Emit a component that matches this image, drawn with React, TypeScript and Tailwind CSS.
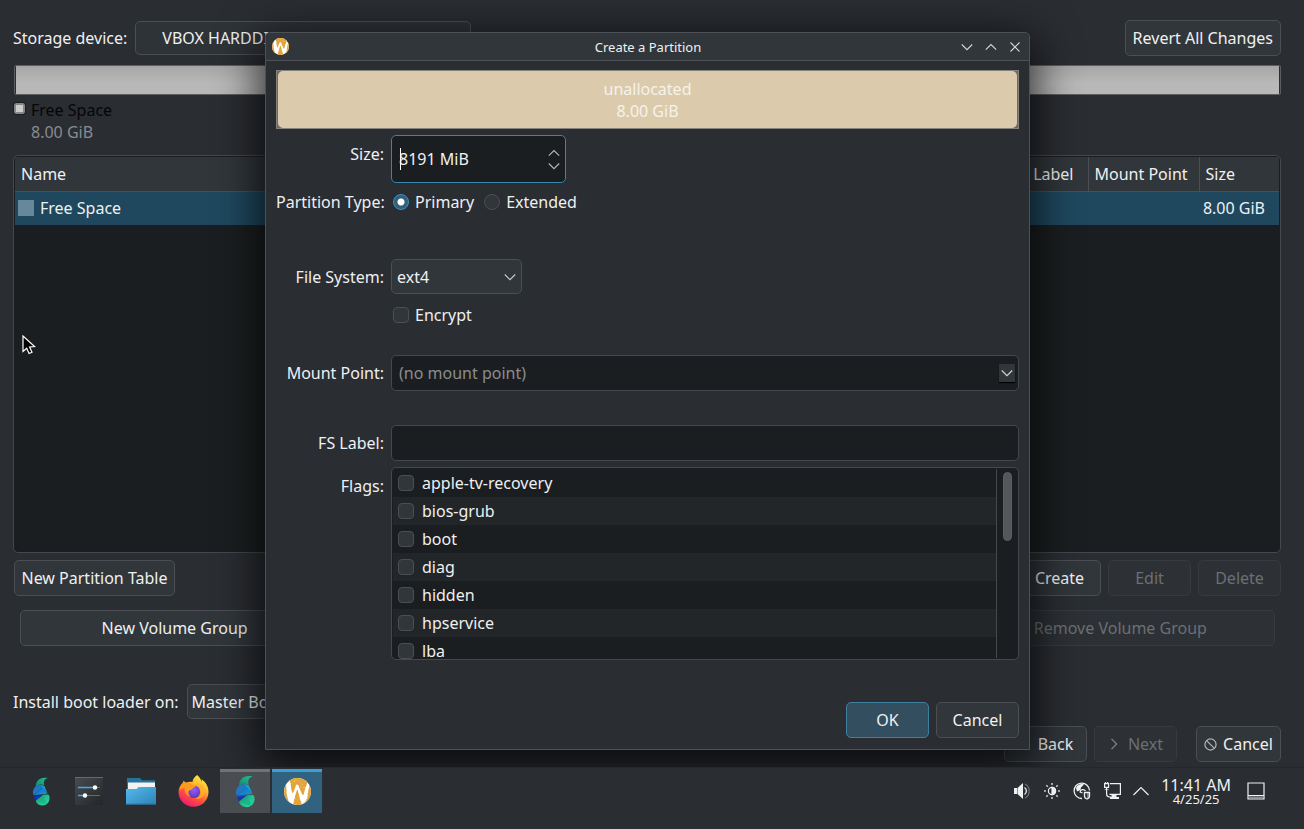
import { useState } from "react";
import type { ReactNode } from "react";
import clsx from "clsx";
import { SiWayland } from "react-icons/si";

const flags = ["apple-tv-recovery", "bios-grub", "boot", "diag", "hidden", "hpservice", "lba"];

type ButtonProps = {
  children: ReactNode;
  disabled?: boolean;
  primary?: boolean;
  className?: string;
};

function Button({ children, disabled, primary, className }: ButtonProps) {
  return (
    <button
      type="button"
      disabled={disabled}
      className={clsx(
        "flex h-9 items-center justify-center gap-2 whitespace-nowrap rounded-[5px] border",
        disabled && "border-[#373b40] bg-[#2d3136] text-[#6b6f73]",
        !disabled && primary && "border-[#3f7f9f] bg-[#334e5e]",
        !disabled && !primary && "border-[#4b4f53] bg-[#31363b]",
        className
      )}
    >
      {children}
    </button>
  );
}

function Chevron({ d, className }: { d: string; className?: string }) {
  return (
    <svg viewBox="0 0 12 12" className={clsx("h-3 w-3 shrink-0", className)} fill="none" stroke="currentColor" strokeWidth="1.1">
      <path d={d} />
    </svg>
  );
}

const DOWN = "M0.8 3.5 6 8.7l5.2-5.2";
const UP = "M0.8 8.7 6 3.5l5.2 5.2";
const CLOSE = "M1.5 1.5l9 9m0-9l-9 9";
const LEFT = "M8.7 0.8 3.5 6l5.2 5.2";
const RIGHT = "M3.5 0.8 8.7 6l-5.2 5.2";

function WaylandLogo({ className }: { className?: string }) {
  return (
    <span className={clsx("block overflow-hidden rounded-full bg-white", className)}>
      <SiWayland className="h-full w-full scale-125 text-[#e3a53a]" />
    </span>
  );
}

function SeedLogo({ className }: { className?: string }) {
  return (
    <svg viewBox="194 28 64 104" className={className}>
      <defs>
        <linearGradient id="tail" x1="0" y1="1" x2="1" y2="0">
          <stop offset="0" stopColor="#128a70" />
          <stop offset="1" stopColor="#22c08e" />
        </linearGradient>
        <linearGradient id="belly" x1="0" y1="0" x2="1" y2="1">
          <stop offset="0" stopColor="#1a66cc" />
          <stop offset="1" stopColor="#0e9bd8" />
        </linearGradient>
        <linearGradient id="seed" x1="0" y1="0" x2="1" y2="1">
          <stop offset="0" stopColor="#19a581" />
          <stop offset="1" stopColor="#25dd9f" />
        </linearGradient>
      </defs>
      <path d="M251 32C240 34 233 43 238 58L224 54 207 62C207 40 224 26 251 32z" fill="url(#tail)" />
      <path d="M206 62L223 55 231 66 199 93C195 82 197 72 206 62z" fill="#2277c4" />
      <path d="M231 66L249 88 200 93z" fill="url(#belly)" />
      <path d="M223 55L238 60 250 88 231 66z" fill="#14a4cf" />
      <path d="M202 97L228 94 206 112C203 107 201 102 202 97z" fill="#0b34c8" />
      <path d="M207 113L234 92 253 91C262 103 254 130 232 130 218 130 210 123 207 113z" fill="url(#seed)" />
      <path d="M207 113L234 92 246 126z" fill="#16a27c" opacity=".45" />
    </svg>
  );
}

function SettingsIcon() {
  return (
    <svg viewBox="0 0 28 28" className="h-7 w-7">
      <defs>
        <linearGradient id="panel" x1="0" y1="0" x2="1" y2="1">
          <stop offset="0" stopColor="#4a4d50" />
          <stop offset="1" stopColor="#232629" />
        </linearGradient>
      </defs>
      <path d="M0 0h28v28H0z" fill="url(#panel)" />
      <path d="M0 0h28v1H0z" fill="#65696d" />
      <path d="M20 10.5h5M10 18.500h15" stroke="#66696c" strokeWidth="1.2" />
      <path d="M3 10.500h17M3 18.500h7" stroke="#3daee9" strokeWidth="1.4" />
      <circle cx="20" cy="10.500" r="2.200" fill="#fff" />
      <circle cx="10" cy="18.500" r="2.200" fill="#fff" />
    </svg>
  );
}

function FolderIcon() {
  return (
    <svg viewBox="0 0 30 27" className="h-[27px] w-[30px]">
      <defs>
        <linearGradient id="folder" x1="0" y1="0" x2="1" y2="1">
          <stop offset="0" stopColor="#55b9ee" />
          <stop offset="1" stopColor="#2d83b5" />
        </linearGradient>
      </defs>
      <path d="M1 0h13l2 2.200h13V14H1z" fill="#27719b" />
      <path d="M2 4.500h27V14H2z" fill="#f2f2f2" />
      <path d="M0 11h10.500l2-2H30v17.500H0z" fill="url(#folder)" />
      <path d="M0 25.700h30v.8H0z" fill="#276f98" />
    </svg>
  );
}

function FirefoxIcon() {
  return (
    <svg viewBox="0 0 92 96" className="h-8 w-[31px]">
      <defs>
        <linearGradient id="fire" x1=".8" y1="0" x2=".25" y2="1">
          <stop offset="0" stopColor="#fff14a" />
          <stop offset=".35" stopColor="#ffb52e" />
          <stop offset=".62" stopColor="#ff5a36" />
          <stop offset="1" stopColor="#ec1378" />
        </linearGradient>
        <radialGradient id="globe" cx=".5" cy=".35" r=".65">
          <stop offset="0" stopColor="#9a5cf5" />
          <stop offset="1" stopColor="#5a38c0" />
        </radialGradient>
      </defs>
      <path d="M57 0C65 7 69 14 70 21 71 18 71 16 70 13 85 23 92 38 91 53 89 78 70 95 46 95 21 95 1 76 1 51 1 39 6 30 14 23L17 17C19 21 21 22 24 23 30 20 37 20 43 21 43 12 49 6 57 0z" fill="url(#fire)" />
      <circle cx="47" cy="50" r="19" fill="url(#globe)" />
      <path d="M14 23L17 17C19 21 21 22 24 23 32 21 36 24 40 29L55 31C54 36 48 38 44 39 43 43 39 45 34 46 28 51 31 60 38 65 24 63 17 49 20 38 12 40 7 43 4 47 5 37 8 29 14 23z" fill="#ff9a1f" />
      <path d="M48 29C61 27 70 38 69 50 68 62 60 69 49 70 66 76 80 64 79 47 78 35 69 27 57 25z" fill="#ffb129" opacity=".8" />
    </svg>
  );
}

function VolumeIcon() {
  return (
    <svg viewBox="0 0 18 18" className="h-[18px] w-[18px]" fill="none" stroke="currentColor">
      <path d="M1 6h3v6H1zM4.500 6 10 1v16l-5.500-5z" fill="currentColor" stroke="none" />
      <path d="M11.500 5.500c2.500 1.500 2.500 5.500 0 7" strokeWidth="1.300" />
      <path d="M12 2c5.500 2.500 5.500 11.500 0 14" strokeWidth="1.200" opacity=".35" />
    </svg>
  );
}

function BrightnessIcon() {
  return (
    <svg viewBox="0 0 18 18" className="h-[18px] w-[18px]" fill="none" stroke="currentColor" strokeWidth="1.200">
      <circle cx="9" cy="9" r="3.600" />
      <path d="M9 5.400a3.600 3.600 0 0 1 0 7.200z" fill="currentColor" />
      <path d="M9 1v2M9 15v2M1 9h2M15 9h2M3.300 3.300l1.500 1.500M13.200 13.200l1.500 1.500M14.700 3.300l-1.500 1.500M4.800 13.200l-1.500 1.500" strokeWidth="1.600" opacity=".8" />
    </svg>
  );
}

function VaultIcon() {
  return (
    <svg viewBox="0 0 18 18" className="h-[18px] w-[18px]" fill="none" stroke="currentColor" strokeWidth="1.300">
      <path d="M16.500 8.500A7.700 7.700 0 1 0 9 16.500" />
      <path d="M3 6C5 2 8 1.500 11 2.500L8 5.500 7.500 8 4 9.500z" fill="currentColor" stroke="none" />
      <path d="M7 10.500c0-3 4-4 5.500-1.500M7 10l2.500 1" />
      <path d="M11.500 10.500h5V14c0 1.500-1 2.500-2.500 3-1.500-.5-2.500-1.500-2.500-3z" />
      <path d="M14 10.500h2.500V14c0 1.500-1 2.500-2.500 3z" fill="currentColor" opacity=".4" stroke="none" />
    </svg>
  );
}

function NetworkIcon() {
  return (
    <svg viewBox="0 0 18 18" className="h-[18px] w-[18px]" fill="none" stroke="currentColor" strokeWidth="1.200">
      <path d="M7 1.600h10.400v10.800H6.500" />
      <path d="M1.600 1.600H5.600v3.800H1.600zM2.500 1v-1M4.700 1v-1M3.600 5.400v6.600c0 2 1.200 3 3 3h1.700" />
      <path d="M1.600 7.500h4" opacity=".6" />
      <path d="M8.500 13h5v2H16v2H7v-2h1.500z" fill="currentColor" stroke="none" />
    </svg>
  );
}

function FormRow({ label, htmlFor, top, children }: { label: string; htmlFor: string; top?: boolean; children: ReactNode }) {
  return (
    <div className={clsx("flex gap-[7px]", top ? "items-start" : "items-center")}>
      <label htmlFor={htmlFor} className={clsx("w-[108px] shrink-0 whitespace-nowrap text-right", top && "pt-2")}>
        {label}
      </label>
      {children}
    </div>
  );
}

function PartitionDialog() {
  const [type, setType] = useState("primary");

  return (
    <section
      role="dialog"
      aria-labelledby="dialog-title"
      className="absolute left-[265px] right-[274px] top-8 rounded-t-[5px] border border-[#4e5256] bg-[#2a2d32] shadow-[0_12px_44px_6px_rgba(0,0,0,0.75)]"
    >
      <header className="flex h-7 items-center rounded-t-[5px] border-b border-[#4e5256] bg-[#31363b] px-1.5">
        <WaylandLogo className="h-[17px] w-[17px]" />
        <h1 id="dialog-title" className="flex-1 pl-[46px] text-center text-[13px] leading-5">
          Create a Partition
        </h1>
        <div className="flex gap-3 pr-0.5 text-[#d4d6d7]">
          <button type="button" aria-label="Minimize"><Chevron d={DOWN} /></button>
          <button type="button" aria-label="Maximize"><Chevron d={UP} /></button>
          <button type="button" aria-label="Close"><Chevron d={CLOSE} /></button>
        </div>
      </header>

      <div className="px-2.5 pb-[11px] pt-[9px]">
        <div className="h-[59px] border border-[#85827b] bg-[#686a6c] px-px">
          <div className="flex h-full flex-col items-center justify-center rounded-[5px] bg-[#dbcbac] leading-[22px] text-[#f6f2ea]">
            <span>unallocated</span>
            <span>8.00 GiB</span>
          </div>
        </div>

        <div className="mt-1.5">
          <FormRow label="Size:" htmlFor="size" top>
            <div className="relative flex h-12 w-[175px] items-center rounded-[5px] border border-[#3587b0] bg-[#1b1e20] px-[7px]">
              <input id="size" type="text" defaultValue="8191 MiB" className="w-full min-w-0 bg-transparent outline-none" />
              <span className="absolute left-2 top-3 h-[22px] w-px bg-[#fcfcfc]" />
              <div className="-mr-1.5 flex flex-col gap-px text-[#b6b8ba]">
                <button type="button" aria-label="Increase" className="h-3 w-4"><Chevron d={UP} /></button>
                <button type="button" aria-label="Decrease" className="h-3 w-4"><Chevron d={DOWN} /></button>
              </div>
            </div>
          </FormRow>
        </div>

        <div role="radiogroup" aria-labelledby="ptype" className="mt-[5px] flex h-7 items-center gap-[7px]">
          <span id="ptype" className="w-[108px] shrink-0 whitespace-nowrap text-right">Partition Type:</span>
          <div className="flex gap-2.5 pl-0.5">
            {["Primary", "Extended"].map((name) => (
              <label key={name} className="flex items-center gap-1.5">
                <input
                  type="radio"
                  name="partition-type"
                  checked={type === name.toLowerCase()}
                  onChange={() => setType(name.toLowerCase())}
                  className="h-4 w-4 appearance-none rounded-full border border-[#4b4f53] bg-[#31363b] checked:border-[#3a93c2] checked:bg-[radial-gradient(circle,#ffffff_3px,#335f78_4px)]"
                />
                {name}
              </label>
            ))}
          </div>
        </div>

        <div className="mt-[43px]">
          <FormRow label="File System:" htmlFor="fs">
            <div className="relative w-[131px]">
              <select id="fs" className="h-[35px] w-full appearance-none rounded-[5px] border border-[#4b4f53] bg-[#31363b] px-[5px]">
                <option>ext4</option>
              </select>
              <Chevron d={DOWN} className="pointer-events-none absolute right-1.5 top-3 text-[#c8cacb]" />
            </div>
          </FormRow>
        </div>

        <label className="ml-[117px] mt-[9px] flex h-6 w-fit items-center gap-1.5">
          <input type="checkbox" className="h-4 w-4 appearance-none rounded-[4px] border border-[#4b4f53] bg-[#31363b]" />
          Encrypt
        </label>

        <div className="mt-7">
          <FormRow label="Mount Point:" htmlFor="mount">
            <div className="flex h-9 min-w-0 flex-1 items-center rounded-[5px] border border-[#45494d] bg-[#1b1e20] pl-[7px] pr-[3px]">
              <input id="mount" type="text" placeholder="(no mount point)" className="min-w-0 flex-1 bg-transparent outline-none placeholder:text-[#8a8d90]" />
              <button type="button" aria-label="Show mount points" className="flex h-[18px] w-4 items-center justify-center bg-[#31363b] text-[#d4d6d7] shadow-[0_1px_1px_#000]">
                <Chevron d={DOWN} />
              </button>
            </div>
          </FormRow>
        </div>

        <div className="mt-[34px]">
          <FormRow label="FS Label:" htmlFor="fslabel">
            <input id="fslabel" type="text" className="h-9 min-w-0 flex-1 rounded-[5px] border border-[#45494d] bg-[#1b1e20] px-[7px] outline-none" />
          </FormRow>
        </div>

        <div className="mt-1.5">
          <FormRow label="Flags:" htmlFor="flag-boot" top>
            <div className="flex h-[193px] min-w-0 flex-1 overflow-hidden rounded-[5px] border border-[#45494d] bg-[#1b1e20] p-px">
              <ul className="flex-1 border-r border-[#45494d]">
                {flags.map((flag) => (
                  <li key={flag} className="even:bg-[#232629]">
                    <label className="flex h-7 items-center gap-2 pl-[5px]">
                      <input id={`flag-${flag}`} type="checkbox" className="h-4 w-4 appearance-none rounded-[4px] border border-[#4b4f53] bg-[#31363b]" />
                      {flag}
                    </label>
                  </li>
                ))}
              </ul>
              <div className="w-5 pl-1.5 pt-[3px]">
                <div className="h-[69px] w-[9px] rounded-full border border-[#5b5f62] bg-[#54585b]" />
              </div>
            </div>
          </FormRow>
        </div>

        <div className="mt-[42px] flex justify-end gap-[7px]">
          <Button primary className="w-[83px]">OK</Button>
          <Button className="w-[83px]">Cancel</Button>
        </div>
      </div>
    </section>
  );
}

function PartitionTable() {
  return (
    <div className="mt-3 flex-1 overflow-hidden rounded-[5px] border border-[#45494d] bg-[#1b1e20] p-px">
      <table className="w-full table-fixed border-collapse">
        <thead className="border-b border-[#4b4f53] bg-[#31363b] text-left">
          <tr className="h-[34px] whitespace-nowrap">
            <th className="px-1.5 font-normal">Name</th>
            <th className="w-[111px] border-l border-[#4b4f53] pr-3.5 text-right font-normal">Label</th>
            <th className="w-[111px] border-l border-[#4b4f53] px-1.5 font-normal">Mount Point</th>
            <th className="w-[80px] border-l border-[#4b4f53] px-1.5 font-normal">Size</th>
          </tr>
        </thead>
        <tbody>
          <tr className="h-[34px] bg-[#1f485e]">
            <td className="pl-[3px]">
              <span className="flex items-center gap-1.5">
                <span className="h-4 w-4 bg-[#66889a]" />
                Free Space
              </span>
            </td>
            <td />
            <td />
            <td className="whitespace-nowrap pr-3.5 text-right">8.00 GiB</td>
          </tr>
        </tbody>
      </table>
    </div>
  );
}

function Taskbar() {
  return (
    <footer className="relative z-10 flex items-start border-t border-[#25282b] bg-[#2a2d32] pb-4 pl-5 pr-[39px] pt-px">
      <nav className="flex flex-1 gap-0.5">
        <button type="button" aria-label="Application launcher" className="flex h-11 w-[42px] items-center justify-center">
          <SeedLogo className="h-[29px] w-[18px]" />
        </button>
        <button type="button" aria-label="System settings" className="flex h-11 w-[50px] items-center justify-center">
          <SettingsIcon />
        </button>
        <button type="button" aria-label="Files" className="flex h-11 w-[50px] items-center justify-center">
          <FolderIcon />
        </button>
        <button type="button" aria-label="Firefox" className="flex h-11 w-[50px] items-center justify-center">
          <FirefoxIcon />
        </button>
        <button type="button" aria-label="Installer" className="flex h-11 w-[50px] items-center justify-center border-t-3 border-[#717477] bg-[#4a4d51] pb-0.5">
          <SeedLogo className="h-[33px] w-5" />
        </button>
        <button type="button" aria-label="Create a Partition" className="flex h-11 w-[50px] items-center justify-center border-t-3 border-[#3d9fd8] bg-[#316380] pb-0.5">
          <WaylandLogo className="h-[27px] w-[27px]" />
        </button>
      </nav>
      <div className="flex h-11 items-center gap-3">
        <VolumeIcon />
        <BrightnessIcon />
        <VaultIcon />
        <NetworkIcon />
        <svg viewBox="0 0 16 16" className="h-4 w-4" fill="none" stroke="currentColor" strokeWidth="1.200">
          <path d="M.5 12 8 4.500l7.500 7.500" />
        </svg>
        <time className="flex flex-col items-center whitespace-nowrap pr-1">
          <span className="leading-4">11:41 AM</span>
          <span className="text-[13px] leading-[13px]">4/25/25</span>
        </time>
        <svg viewBox="0 0 18 18" className="h-[18px] w-[18px]" fill="none" stroke="currentColor" strokeWidth="1.200">
          <path d="M1 1h16v16H1zM1 13.500h16" />
          <path d="M2 15.300h14" strokeWidth="2" opacity=".45" />
        </svg>
      </div>
    </footer>
  );
}

export default function App() {
  return (
    <div className="relative flex min-h-screen flex-col overflow-hidden bg-[#2a2d32] font-['Noto_Sans',sans-serif] text-[16px] leading-[22px] text-[#eff0f1]">
      <main className="flex flex-1 flex-col pb-[5px] pl-[13px] pr-[23px] pt-5">
        <div className="flex items-center">
          <label htmlFor="device">Storage device:</label>
          <select id="device" className="ml-2 h-[34px] w-[336px] appearance-none rounded-[5px] border border-[#4b4f53] bg-[#2e3338] px-[26px]">
            <option>VBOX HARDDISK - 8.00 GiB (/dev/sda)</option>
          </select>
          <Button className="ml-auto px-[7px]">Revert All Changes</Button>
        </div>

        <div className="ml-px mt-[9px] h-[30px] rounded-[2px] border border-[#5c5f61] bg-[#2a2d32] px-px">
          <div className="h-full bg-linear-to-b from-[#a6a6a6] to-[#b8b8b8] to-60%" />
        </div>

        <div className="mt-1 flex gap-1.5">
          <span className="ml-px mt-1 h-[11px] w-[11px] rounded-[2px] border-2 border-[#858789] bg-[#cccccc] outline outline-[#1b1e20]" />
          <div className="flex flex-col">
            <span className="text-[#060606]">Free Space</span>
            <span className="text-[#898b8e]">8.00 GiB</span>
          </div>
        </div>

        <PartitionTable />

        <div className="mt-[7px] flex justify-end gap-[7px]">
          <Button className="ml-px mr-auto w-[161px]">New Partition Table</Button>
          <Button className="w-[83px]">Create</Button>
          <Button className="w-[83px]" disabled>Edit</Button>
          <Button className="w-[83px]" disabled>Delete</Button>
        </div>

        <div className="mt-3.5 grid grid-cols-4 gap-1.5 pl-[7px] pr-1.5">
          <Button>New Volume Group</Button>
          <Button className="col-start-4" disabled>Remove Volume Group</Button>
        </div>

        <div className="mt-[38px] flex items-center">
          <label htmlFor="bootloader">Install boot loader on:</label>
          <select id="bootloader" className="ml-2 h-[35px] w-[320px] appearance-none rounded-[5px] border border-[#4b4f53] bg-[#31363b] px-1">
            <option>Master Boot Record (/dev/sda)</option>
          </select>
        </div>

        <div className="mt-[7px] flex justify-end gap-[7px]">
          <Button className="w-[83px]">
            <Chevron d={LEFT} />
            Back
          </Button>
          <Button className="w-[83px]" disabled>
            <Chevron d={RIGHT} className="text-[#85888b]" />
            Next
          </Button>
          <Button className="ml-3 w-[85px]">
            <svg viewBox="0 0 14 14" className="-mr-0.5 h-[13px] w-[13px] shrink-0" fill="none" stroke="#b4b6b8" strokeWidth="1.300">
              <circle cx="7" cy="7" r="6" />
              <path d="M2.800 2.800l8.400 8.400" />
            </svg>
            Cancel
          </Button>
        </div>
      </main>

      <Taskbar />
      <PartitionDialog />

      {/* mouse pointer */}
      <svg viewBox="0 0 14 20" className="pointer-events-none absolute left-[22px] top-[335px] h-5 w-3.5">
        <path d="M1 1v15.500l3.700-3.300 2.400 5.300 2.900-1.300-2.400-5.200 5-.4z" fill="#000" stroke="#fff" strokeWidth="1.200" />
      </svg>
    </div>
  );
}
